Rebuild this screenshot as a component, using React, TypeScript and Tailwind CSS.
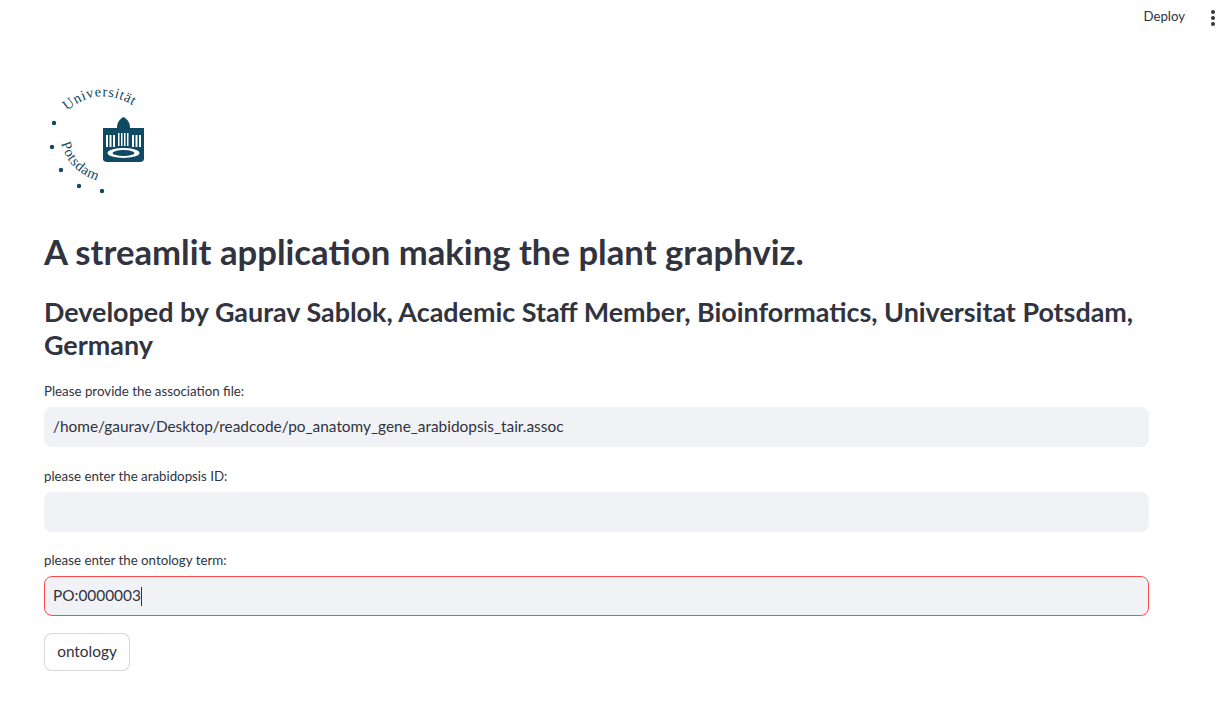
const Logo = () => (
  <svg width="110" height="115" viewBox="0 0 110 115" className="block">
    <defs>
      <path id="topArc" d="M23 26 Q 55 -2 93 23" fill="none" />
      <path id="bottomArc" d="M17 58 Q 25 90 62 98" fill="none" />
    </defs>
    <text fontFamily="'Liberation Serif', serif" fontSize="14.5" letterSpacing="0.7" fill="#0f4a63">
      <textPath href="#topArc">Universität</textPath>
    </text>
    <text fontFamily="'Liberation Serif', serif" fontSize="14.5" letterSpacing="0.7" fill="#0f4a63">
      <textPath href="#bottomArc">Potsdam</textPath>
    </text>
    <g fill="#0f4a63">
      <circle cx="10" cy="38" r="2.200" />
      <circle cx="8" cy="62" r="2.200" />
      <circle cx="17" cy="85" r="2.200" />
      <circle cx="35" cy="101" r="2.200" />
      <circle cx="58" cy="106" r="2.200" />
      <path d="M73 43c0-6 3-9 6.500-11 3.500 2 6.500 5 6.500 11z" />
      <path d="M59 43h41v3H59z" />
      <path d="M59 46h41v28c0 2-2 3-4 3H63c-2 0-4-1-4-3z" />
    </g>
    <g fill="#fff">
      <path d="M62 50h2v12h-2zM65.500 50h2v12h-2zM69 50h2v12h-2zM74 48h1.500v13h-1.500zM77 48h1.500v13h-1.500zM80 48h1.500v13h-1.500zM83 48h1.500v13h-1.500zM88 50h2v12h-2zM91.500 50h2v12h-2zM95 50h2v12h-2z" />
      <ellipse cx="79.500" cy="68" rx="16" ry="5" />
    </g>
    <ellipse cx="79.500" cy="68" rx="11" ry="3" fill="#0f4a63" />
  </svg>
);

const Field = ({ label, value, error }: { label: string; value?: string; error?: boolean }) => (
  <div className="flex flex-col">
    <p className="text-[13.3px] leading-[18px] mb-[7px] text-[#31333f]">{label}</p>
    <div className={`h-[40px] rounded-lg bg-[#f0f2f6] px-[8px] flex items-center text-[15.4px] text-[#31333f] border ${error ? 'border-[#ff4b4b]' : 'border-[#f0f2f6]'}`}>
      <span>{value}</span>
      {error && <span className="w-px h-[19px] bg-[#31333f]" />}
    </div>
  </div>
);

const App = () => {
  return (
    <div className="font-['Lato','Noto_Sans',sans-serif] w-[1227px] h-[718px] overflow-hidden bg-white text-[#31333f]">
      <div className="h-[35px] flex justify-end items-center gap-[23px] pr-[9px]">
        <p className="text-[13.2px] -translate-y-px">Deploy</p>
        <div className="flex flex-col gap-[2px] w-[10px] items-center">
          <span className="w-[4px] h-[4px] rounded-full bg-[#31333f]" />
          <span className="w-[4px] h-[4px] rounded-full bg-[#31333f]" />
          <span className="w-[4px] h-[4px] rounded-full bg-[#31333f]" />
        </div>
      </div>
      <div className="pl-[44px] w-[1149px] pt-[50px] flex flex-col">
        <Logo />
        <h1 className="mt-[30px] text-[34.7px] leading-[44px] font-bold">A streamlit application making the plant graphviz.</h1>
        <h2 className="mt-[21px] text-[26.9px] leading-[33px] font-bold">Developed by Gaurav Sablok, Academic Staff Member, Bioinformatics, Universitat Potsdam, Germany</h2>
        <div className="mt-[21px] flex flex-col gap-[19.500px]">
          <Field label="Please provide the association file:" value="/home/gaurav/Desktop/readcode/po_anatomy_gene_arabidopsis_tair.assoc" />
          <Field label="please enter the arabidopsis ID:" />
          <Field label="please enter the ontology term:" value="PO:0000003" error />
        </div>
        <button className="mt-[17px] w-[86px] h-[38px] rounded-lg border border-[#31333f33] bg-white text-[15.4px]">ontology</button>
      </div>
    </div>
  );
};

export default App;
